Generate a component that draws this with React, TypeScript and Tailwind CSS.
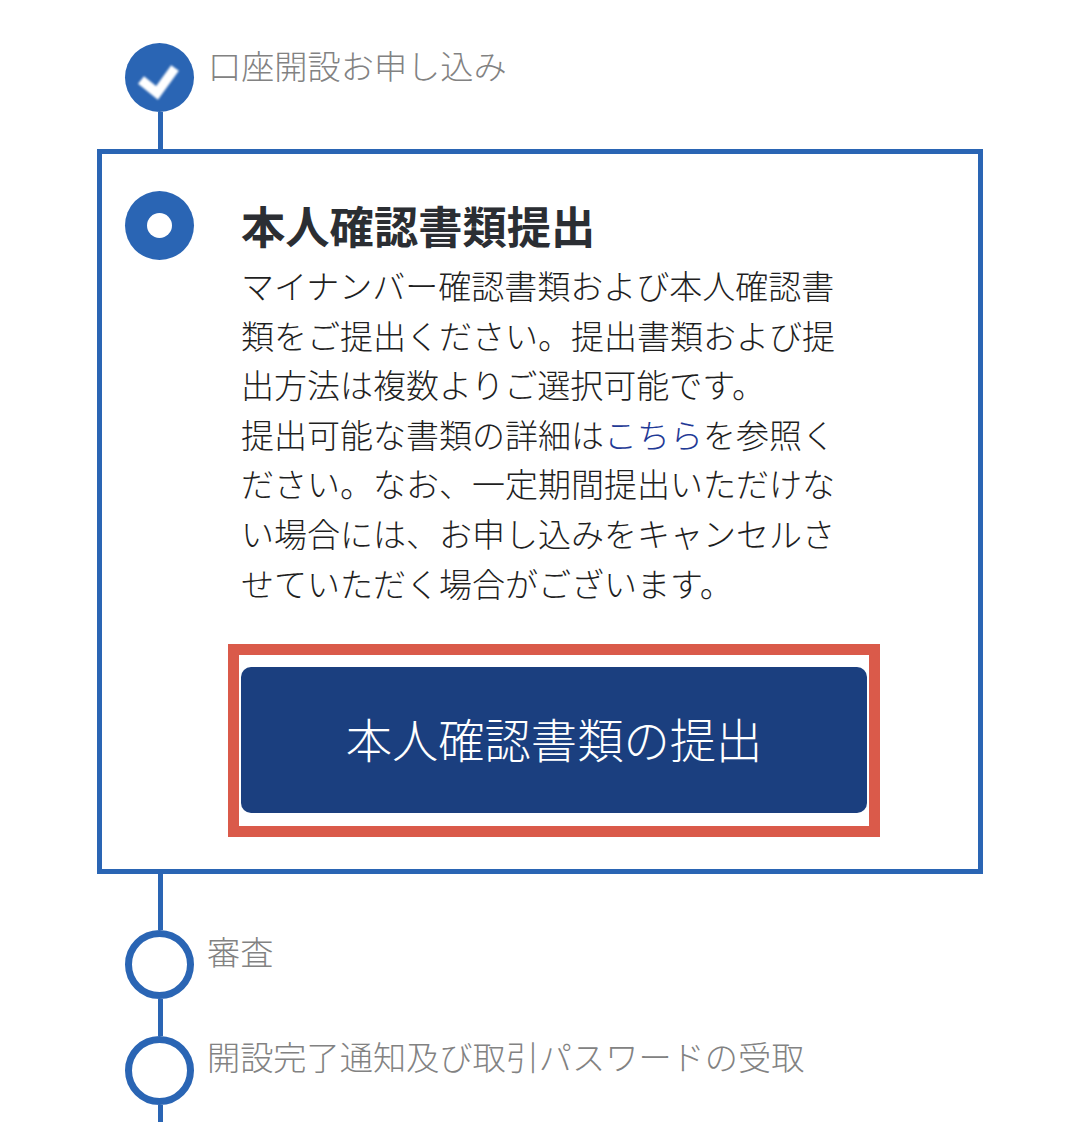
const jp = "font-['Noto_Sans_CJK_JP','Liberation_Sans',sans-serif]";

function Line({ h }: { h: string }) {
  return <div className={`${h} ml-[61px] w-[5px] bg-[#2a65b4]`} />;
}

function Label({ children }: { children: React.ReactNode }) {
  return <p className="text-[33.2px] font-light leading-[44px] text-[#828282]">{children}</p>;
}

function OpenCircle() {
  return <div className="h-[69px] w-[69px] shrink-0 rounded-full border-[7px] border-[#2a65b4] bg-white" />;
}

export default function App() {
  return (
    <main className={`${jp} h-[1122px] w-[1080px] overflow-hidden bg-white pl-[97px] pt-[43px]`}>
      {/* done */}
      <div className="flex h-[69px] pl-[28px]">
        <div className="flex h-[69px] w-[69px] shrink-0 items-center justify-center rounded-full bg-[#2a65b4]">
          <svg width="69" height="69" viewBox="0 0 69 69" fill="none" className="blur-[0.8px]">
            <path d="M16 37 L32 50 L50 25" stroke="#fff" strokeWidth="9.5" strokeLinejoin="miter" />
          </svg>
        </div>
        <div className="ml-[14px]">
          <Label>口座開設お申し込み</Label>
        </div>
      </div>
      <Line h="h-[37px]" />

      {/* current */}
      <section className="flex h-[725px] w-[886px] border-[5px] border-[#2a65b4] pl-[23px] pt-[37px]">
        <div className="flex h-[69px] w-[69px] shrink-0 items-center justify-center rounded-full bg-[#2a65b4]">
          <div className="h-[25px] w-[25px] rounded-full bg-white" />
        </div>
        <div className="ml-[48px] mt-[9px]">
          <h1 className="-ml-[1px] text-[44.3px] font-bold leading-[50px] text-[#2b2e33]">本人確認書類提出</h1>
          <p className="-ml-[1px] mt-[11px] w-[600px] text-[33px] font-light leading-[49.6px] text-[#1f1f1f]">
            マイナンバー確認書類および本人確認書類をご提出ください。提出書類および提出方法は複数よりご選択可能です。
            <br />
            提出可能な書類の詳細は<span className="text-[#1f3a96]">こちら</span>
            を参照ください。なお、一定期間提出いただけない場合には、お申し込みをキャンセルさせていただく場合がございます。
          </p>
          <div className="-ml-[14px] mt-[36px] h-[193px] w-[652px] border-[11px] border-[#da5a4a] px-[2px] py-[12px]">
            <button className="flex h-[146px] w-[626px] items-center justify-center rounded-[10px] bg-[#1b3f7f] pb-[4px] text-[46.3px] font-light text-white">
              本人確認書類の提出
            </button>
          </div>
        </div>
      </section>

      {/* upcoming */}
      <Line h="h-[56px]" />
      <div className="flex h-[69px] pl-[28px]">
        <OpenCircle />
        <div className="ml-[13px] -mt-[1px]">
          <Label>審査</Label>
        </div>
      </div>
      <Line h="h-[37px]" />
      <div className="flex h-[69px] pl-[28px]">
        <OpenCircle />
        <div className="ml-[13px] -mt-[2px]">
          <Label>開設完了通知及び取引パスワードの受取</Label>
        </div>
      </div>
      <Line h="h-[20px]" />
    </main>
  );
}
